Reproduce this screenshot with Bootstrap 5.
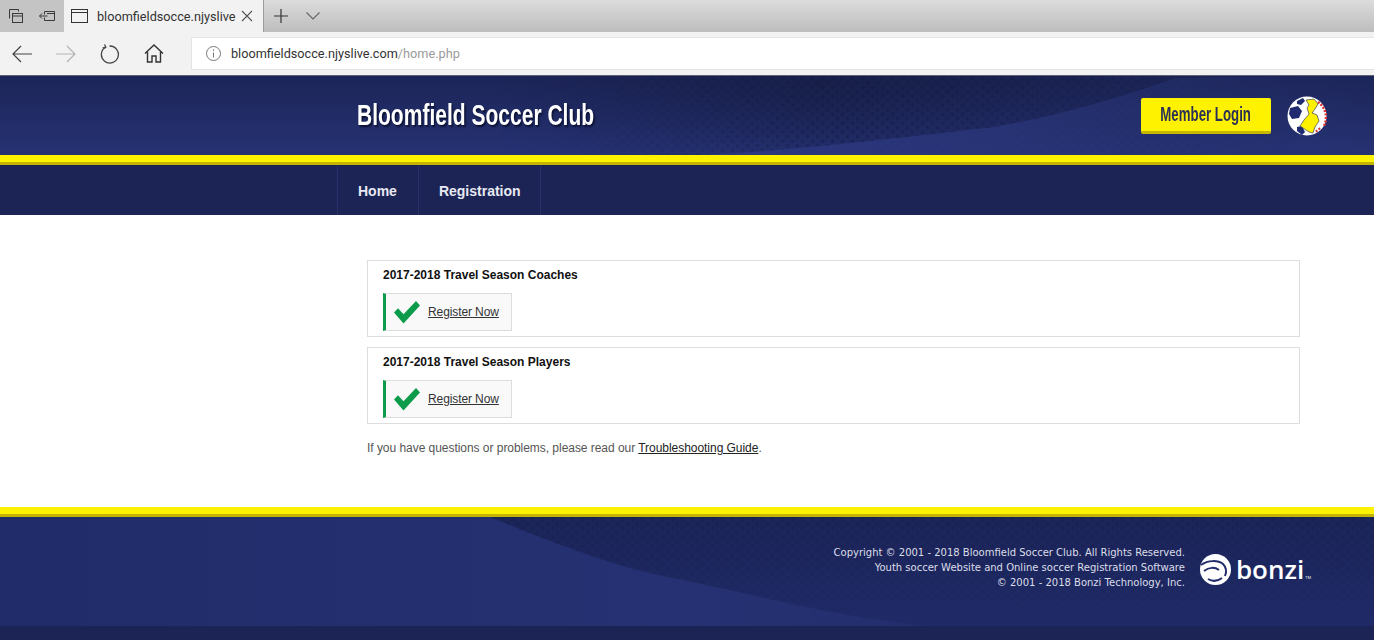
<!DOCTYPE html>
<html lang="en">
<head>
  <meta charset="UTF-8">
  <title>Bloomfield Soccer Club</title>
  <link href="https://cdn.jsdelivr.net/npm/bootstrap@5.3.0/dist/css/bootstrap.min.css" rel="stylesheet">
  <style>
    html, body { height: 640px; overflow: hidden; }
    body { font-family: "Liberation Sans", Arial, sans-serif; font-size: 12px; background: #fff; }

    /* browser chrome */
    .tabstrip { height: 32px; background: linear-gradient(#dcdcdc, #bdbdbd); }
    .tabbtn { width: 32px; height: 32px; background: #c4c4c4; }
    .tabbtn svg, .toolbtn svg, .tabplain svg { display: block; }
    .tabitem { width: 200px; height: 32px; background: #f2f2f2; padding-left: 7px; border-right: 1px solid #9d9d9d; font: 12.7px Roboto, sans-serif; color: #333; }
    .tabtitle { width: 137px; white-space: nowrap; margin-left: 9px; margin-right: 7px; }
    .tabplain { width: 34px; height: 32px; }
    .tabchev { width: 30px; height: 32px; padding-left: 8px; }
    .toolbar { height: 44px; background: #f2f2f2; border-bottom: 1px solid #5d6278; }
    .toolbtn { width: 44px; height: 43px; }
    .addressbar { height: 33px; width: 1183px; margin-left: 15px; margin-top: -1px; background: #fff; border: 1px solid #e4e4e4; border-right: 0; padding-left: 14px; font: 12.7px Roboto, sans-serif; color: #333; white-space: nowrap; }
    .addressbar span { color: #9a9a9a; }
    .addressbar svg { margin-right: 10px; }

    /* site header */
    .sitehead { height: 79px; position: relative; background: linear-gradient(#1c2557, #263274); overflow: hidden; }
    .swoosh { position: absolute; left: 0; top: 0; width: 100%; height: 100%; }
    .headrow { position: relative; height: 79px; padding-left: 357px; padding-right: 47px; }
    .clubname { font-family: "Liberation Sans", sans-serif; font-weight: 700; font-size: 29px; color: #fff; text-shadow: 2px 2px 2px #0c1233; margin: 0; white-space: nowrap; transform: scaleX(.725); transform-origin: left center; }
    .loginbtn { width: 130px; height: 36px; background: #fff200; border: 0; border-bottom: 3px solid #c9b800; border-radius: 2px; color: #2b3056; font-family: "Liberation Sans", sans-serif; font-weight: 700; font-size: 19.5px; padding: 2px 0 0; margin-right: 16px; white-space: nowrap; }
    .loginbtn span { display: inline-block; transform: scaleX(.68); }
    .loginbtn:hover { background: #fff200; color: #2b3056; }
    .yellowbar { height: 10px; background: #fff200; border-bottom: 3px solid #c4b300; }

    /* menu */
    .sitemenu { height: 50px; background: #1b2454; padding-left: 337px; }
    .sitemenu .nav-link { height: 50px; padding: 1px 20px 0; color: #e8e9f2; font: 700 14px/50px "Liberation Sans", sans-serif; border-left: 1px solid #27326a; }
    .sitemenu .nav-item:first-child .nav-link { padding-right: 21px; }
    .sitemenu .nav-item:last-child .nav-link { padding-right: 19px; border-right: 1px solid #27326a; }

    /* content */
    .pagebody { height: 292px; padding: 45px 74px 0 367px; }
    .regbox { height: 77px; border: 1px solid #ddd; border-radius: 0; padding: 7px 15px 0; margin-bottom: 10px; }
    .regbox h5 { font-size: 12px; font-weight: 700; color: #111; margin: 0 0 11px; line-height: 14px; }
    .regbtn { width: 129px; height: 38px; background: #f9f9f9; border: 1px solid #ddd; border-left: 3px solid #0b9b4a; border-radius: 0; padding: 0 0 0 7px; }
    .regbtn a { color: #333; font-size: 12px; margin-left: 7px; letter-spacing: -.1px; }
    .helpline { color: #555; margin: 17px 0 0; line-height: 14px; letter-spacing: -.04px; }
    .helpline a { color: #222; }

    /* footer */
    .sitefoot { height: 109px; position: relative; background: #212c6a; overflow: hidden; }
    .footrow { position: relative; height: 109px; padding-right: 63px; padding-top: 28px; }
    .footcopy { font: 10px/15px "DejaVu Sans", Verdana, sans-serif; color: #dcdee8; text-align: right; white-space: nowrap; }
    .bonzimark { margin-left: 15px; color: #fff; font: 600 26px/32px "Open Sans", sans-serif; margin-top: 8px; }
    .bonzimark sup { font-size: 4px; top: 0; font-weight: 400; margin-left: 1px; }
    .bonzimark svg { margin-right: 5px; }
    .footstrip { height: 14px; background: #1b2454; }
  </style>
</head>
<body>

  <!-- browser chrome -->
  <div class="tabstrip d-flex align-items-center">
    <div class="tabbtn d-flex align-items-center justify-content-center">
      <svg width="16" height="16" viewBox="0 0 16 16" fill="none" stroke="#3a3a3a"><path d="M1.500 10.500v-9h9v2"/><rect x="4.500" y="5.500" width="10" height="9"/><path d="M4.500 8h10"/></svg>
    </div>
    <div class="tabbtn d-flex align-items-center justify-content-center">
      <svg width="18" height="14" viewBox="0 0 18 14" fill="none" stroke="#3a3a3a"><path d="M5.500 2.500h10v9h-10v-3M5.500 5.500v-3M8 4.500h7.500"/><path d="M.5 7h8M3 4.500L.5 7 3 9.500"/></svg>
    </div>
    <div class="tabitem d-flex align-items-center">
      <svg width="17" height="14" viewBox="0 0 17 14" fill="none" stroke="#333"><rect x=".5" y=".5" width="16" height="13"/><path d="M.5 3.500h16"/></svg>
      <div class="tabtitle">bloomfieldsocce.njyslive</div>
      <svg width="12" height="12" viewBox="0 0 12 12" fill="none" stroke="#555" stroke-width="1.100"><path d="M1 1l10 10M11 1L1 11"/></svg>
    </div>
    <div class="tabplain d-flex align-items-center justify-content-center">
      <svg width="14" height="14" viewBox="0 0 14 14" fill="none" stroke="#333" stroke-width="1.200"><path d="M7 0v14M0 7h14"/></svg>
    </div>
    <div class="tabchev d-flex align-items-center justify-content-start">
      <svg width="14" height="8" viewBox="0 0 14 8" fill="none" stroke="#666" stroke-width="1.100"><path d="M.5 .5L7 7l6.500-6.500"/></svg>
    </div>
  </div>
  <div class="toolbar d-flex align-items-center">
    <div class="toolbtn d-flex align-items-center justify-content-center">
      <svg width="20" height="18" viewBox="0 0 20 18" fill="none" stroke="#444" stroke-width="1.200"><path d="M20 9H1M9 1L1 9l8 8"/></svg>
    </div>
    <div class="toolbtn d-flex align-items-center justify-content-center">
      <svg width="20" height="18" viewBox="0 0 20 18" fill="none" stroke="#b5b5b5" stroke-width="1.200"><path d="M0 9h19M11 1l8 8-8 8"/></svg>
    </div>
    <div class="toolbtn d-flex align-items-center justify-content-center">
      <svg width="20" height="20" viewBox="0 0 20 20" fill="none" stroke="#444" stroke-width="1.300"><path d="M5.500 3.200a8.500 8.500 0 1 0 4-1.200"/><path d="M4.500 .5l1.300 2.700-.1.200-3 .6"/></svg>
    </div>
    <div class="toolbtn d-flex align-items-center justify-content-center">
      <svg width="20" height="19" viewBox="0 0 20 19" fill="none" stroke="#333" stroke-width="1.400"><path d="M1 9.500L10 1l9 8.500M3.500 8v10h4.500v-6h4v6h4.500V8"/></svg>
    </div>
    <div class="addressbar d-flex align-items-center">
      <svg width="15" height="15" viewBox="0 0 15 15" fill="none" stroke="#777"><circle cx="7.500" cy="7.500" r="7"/><path d="M7.500 6.500v5M7.500 3.500v1.500"/></svg>
      bloomfieldsocce.njyslive.com<span>/home.php</span>
    </div>
  </div>

  <!-- site header -->
  <header class="sitehead">
    <svg class="swoosh" viewBox="0 0 1374 79" preserveAspectRatio="none">
      <defs>
        <pattern id="hexa" width="10" height="9" patternUnits="userSpaceOnUse">
          <circle cx="2.500" cy="2.200" r="2" fill="#0f1640"/>
          <circle cx="7.500" cy="6.700" r="2" fill="#0f1640"/>
        </pattern>
        <linearGradient id="hexfade" x1="0" y1="0" x2="1" y2="0">
          <stop offset="0" stop-color="#fff" stop-opacity="0"/><stop offset=".45" stop-color="#fff" stop-opacity=".3"/><stop offset="1" stop-color="#fff" stop-opacity=".1"/>
        </linearGradient>
        <mask id="hexmask"><rect x="560" width="640" height="79" fill="url(#hexfade)"/></mask>
        <linearGradient id="lightfade" x1="0" y1="0" x2="1" y2="0">
          <stop offset="0" stop-color="#2c3880"/><stop offset=".45" stop-color="#2a3579" stop-opacity=".8"/><stop offset="1" stop-color="#263274" stop-opacity="0"/>
        </linearGradient>
        <linearGradient id="edgefade" x1="0" y1="0" x2="1" y2="0">
          <stop offset="0" stop-color="#182049" stop-opacity="0"/><stop offset=".4" stop-color="#182049"/><stop offset="1" stop-color="#182049" stop-opacity="0"/>
        </linearGradient>
        <linearGradient id="downfade" x1="0" y1="0" x2="0" y2="1">
          <stop offset="0" stop-color="#fff"/><stop offset="1" stop-color="#fff" stop-opacity=".1"/>
        </linearGradient>
        <mask id="downmask"><rect width="1374" height="79" fill="url(#downfade)"/></mask>
      </defs>
      <rect x="500" width="800" height="79" fill="url(#edgefade)" mask="url(#downmask)"/>
      <rect width="1374" height="79" fill="url(#hexa)" mask="url(#hexmask)"/>
      <path d="M700 79C800 74 900 62 994 51 1060 40 1130 18 1176 2L1374 0V79Z" fill="url(#lightfade)"/>
    </svg>
    <div class="headrow d-flex align-items-center justify-content-between">
      <h1 class="clubname">Bloomfield Soccer Club</h1>
      <div class="d-flex align-items-center">
        <a href="#" class="btn loginbtn d-flex align-items-center justify-content-center"><span>Member Login</span></a>
        <svg width="40" height="40" viewBox="0 0 40 40">
          <circle cx="20" cy="20" r="19.500" fill="#fff"/>
          <path d="M3 12l8-2 4 5-3 7-7 1-3-5zM10 31l5-1 3 6-3 3-5-4zM10 5l6-3 2 3-4 4-4-1z" fill="#1f2a70"/>
          <path d="M19 4l8-1 4 5-3 5-3 4 5 2 2 6-4 6-2 6-4-1-9-6 4-6 5-6-2-6 2-3z" fill="#fff200" stroke="#1b2454" stroke-width=".6"/>
          <path d="M31 6a19 19 0 0 1 6 24" fill="none" stroke="#d33" stroke-width="2.500" stroke-dasharray="2 1.500"/>
          <path d="M33 32a19 19 0 0 1-5 4" fill="none" stroke="#d33" stroke-width="2" stroke-dasharray="2 1.500"/>
        </svg>
      </div>
    </div>
  </header>
  <div class="yellowbar"></div>

  <!-- menu -->
  <nav class="sitemenu">
    <ul class="nav">
      <li class="nav-item"><a class="nav-link" href="#">Home</a></li>
      <li class="nav-item"><a class="nav-link" href="#">Registration</a></li>
    </ul>
  </nav>

  <!-- content -->
  <main class="pagebody">
    <div class="card regbox">
      <h5>2017-2018 Travel Season Coaches</h5>
      <div class="regbtn d-flex align-items-center">
        <svg width="28" height="24" viewBox="0 0 28 22" preserveAspectRatio="none"><path d="M1 11.500l4-4 5.500 5.500L23 1l4 4L10.500 21.500z" fill="#0b9b4a"/></svg>
        <a href="#">Register Now</a>
      </div>
    </div>
    <div class="card regbox">
      <h5>2017-2018 Travel Season Players</h5>
      <div class="regbtn d-flex align-items-center">
        <svg width="28" height="24" viewBox="0 0 28 22" preserveAspectRatio="none"><path d="M1 11.500l4-4 5.500 5.500L23 1l4 4L10.500 21.500z" fill="#0b9b4a"/></svg>
        <a href="#">Register Now</a>
      </div>
    </div>
    <p class="helpline">If you have questions or problems, please read our <a href="#">Troubleshooting Guide</a>.</p>
  </main>

  <!-- footer -->
  <div class="yellowbar"></div>
  <footer class="sitefoot">
    <svg class="swoosh" viewBox="0 0 1374 109" preserveAspectRatio="none">
      <defs>
        <linearGradient id="footdark" x1="0" y1="0" x2="0" y2="1">
          <stop offset="0" stop-color="#1b2558"/><stop offset="1" stop-color="#202a68"/>
        </linearGradient>
        <linearGradient id="footlight" x1="0" y1="0" x2="1" y2="0">
          <stop offset="0" stop-color="#212c6a"/><stop offset=".7" stop-color="#253172"/><stop offset="1" stop-color="#232e6e"/>
        </linearGradient>
        <pattern id="hexb" width="10" height="9" patternUnits="userSpaceOnUse">
          <circle cx="2.500" cy="2.200" r="2" fill="#121a48" opacity=".3"/>
          <circle cx="7.500" cy="6.700" r="2" fill="#121a48" opacity=".3"/>
        </pattern>
        <linearGradient id="footfade" x1="0" y1="0" x2="0" y2="1">
          <stop offset="0" stop-color="#fff"/><stop offset="1" stop-color="#fff" stop-opacity="0"/>
        </linearGradient>
        <mask id="footmask"><rect width="1374" height="109" fill="url(#footfade)"/></mask>
      </defs>
      <rect width="960" height="109" fill="url(#footlight)"/>
      <path d="M490 0C515 10 530 17 553 25 580 35 605 44 630 51 655 58 680 62 706 68 735 74 760 80 783 85 810 91 835 96 860 100 885 104 905 107 928 109H1374V0Z" fill="url(#footdark)"/>
      <path d="M490 0C515 10 530 17 553 25 580 35 605 44 630 51 655 58 680 62 706 68 735 74 760 80 783 85 810 91 835 96 860 100 885 104 905 107 928 109H1374V0Z" fill="url(#hexb)" mask="url(#footmask)"/>
    </svg>
    <div class="footrow d-flex justify-content-end align-items-start">
      <div class="footcopy">
        Copyright © 2001 - 2018 Bloomfield Soccer Club. All Rights Reserved.<br>
        Youth soccer Website and Online soccer Registration Software<br>
        © 2001 - 2018 Bonzi Technology, Inc.
      </div>
      <div class="bonzimark d-flex align-items-center">
        <svg width="31" height="31" viewBox="0 0 31 31">
          <circle cx="15.500" cy="15.500" r="15.500" fill="#fff"/>
          <path d="M1 11C8 6 18 6 23 10c3 3 4 7 2 12M4 17c5-4 11-4 15-1M8 25c5 3 10 2 14-1" fill="none" stroke="#212c6a" stroke-width="2"/>
        </svg>
        <span>bonzi<sup>TM</sup></span>
      </div>
    </div>
  </footer>
  <div class="footstrip"></div>

  <script src="https://cdn.jsdelivr.net/npm/bootstrap@5.3.0/dist/js/bootstrap.bundle.min.js"></script>
</body>
</html>
